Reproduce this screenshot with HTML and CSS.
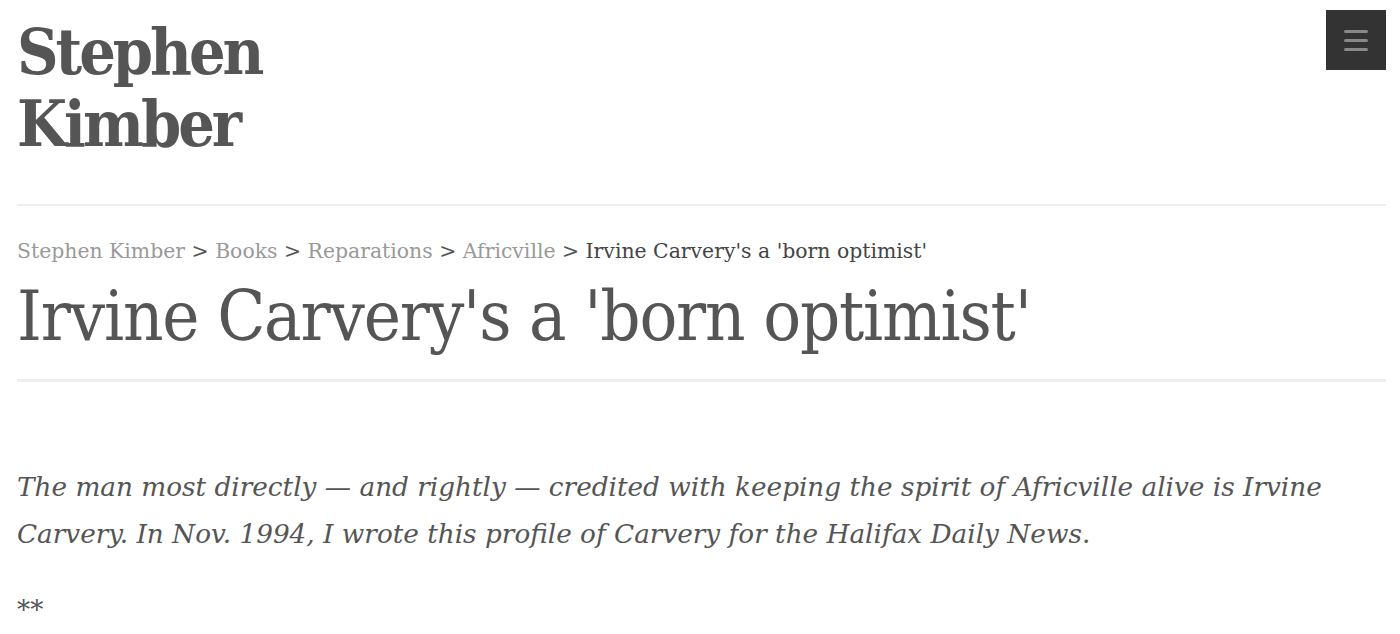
FILE: index.html
```html
<!DOCTYPE html>
<html lang="en">
<head>
<meta charset="utf-8">
<title>Irvine Carvery's a 'born optimist' – Stephen Kimber</title>
<link rel="stylesheet" href="styles.css">
</head>
<body>
<div class="page">
  <header class="site-header">
    <div class="site-title">Stephen<br>Kimber</div>
    <button class="menu-toggle" aria-label="Menu">
      <span></span><span></span><span></span>
    </button>
  </header>
  <div class="entry-header">
    <nav class="breadcrumbs">
      <a href="#">Stephen Kimber</a> &gt; <a href="#">Books</a> &gt; <a href="#">Reparations</a> &gt; <a href="#">Africville</a> &gt; <span class="current">Irvine Carvery's a 'born optimist'</span>
    </nav>
    <h1 class="entry-title">Irvine Carvery's a 'born optimist'</h1>
  </div>
  <div class="entry-content">
    <p class="intro">The man most directly — and rightly — credited with keeping the spirit of Africville alive is Irvine Carvery. In Nov. 1994, I wrote this profile of Carvery for the Halifax Daily News.</p>
    <p class="sep">**</p>
  </div>
</div>
</body>
</html>
```

FILE: styles.css
```css
html, body {
  margin: 0;
  padding: 0;
  background: #fff;
}
body {
  font-family: "DejaVu Serif", "Liberation Serif", serif;
  color: #555;
}
.page {
  padding: 0 14px 0 17px;
}
.site-header {
  display: flex;
  justify-content: space-between;
  align-items: flex-start;
  padding-top: 10px;
  padding-bottom: 44px;
  border-bottom: 2px solid #eee;
}
.site-title {
  font-family: "DejaVu Serif Condensed", "DejaVu Serif", serif;
  font-stretch: condensed;
  font-weight: bold;
  font-size: 64px;
  line-height: 72px;
  letter-spacing: -3px;
  color: #555;
  margin-top: 6px;
}
.menu-toggle {
  width: 60px;
  height: 60px;
  background: #333;
  border: 0;
  padding: 0;
  display: flex;
  flex-direction: column;
  align-items: center;
  justify-content: center;
  gap: 6px;
  cursor: pointer;
}
.menu-toggle span {
  display: block;
  width: 24px;
  height: 3px;
  border-radius: 2px;
  background: #888;
}
.entry-header {
  padding-top: 31px;
  padding-bottom: 23px;
  border-bottom: 3px solid #eee;
}
.breadcrumbs {
  font-size: 20.4px;
  line-height: 28px;
  color: #555;
}
.breadcrumbs a {
  color: #999;
  text-decoration: none;
}
.breadcrumbs .current {
  color: #444;
}
.entry-title {
  font-family: "DejaVu Serif Condensed", "DejaVu Serif", serif;
  font-stretch: condensed;
  font-weight: normal;
  font-size: 70px;
  line-height: 80px;
  margin: 11px 0 0;
  letter-spacing: -1.2px;
  color: #555;
}
.entry-content {
  padding-top: 82px;
}
.intro {
  font-style: italic;
  font-size: 26.3px;
  line-height: 47px;
  margin: 0 0 29px;
  color: #555;
}
.sep {
  font-size: 26.3px;
  line-height: 47px;
  margin: 0;
}
```
